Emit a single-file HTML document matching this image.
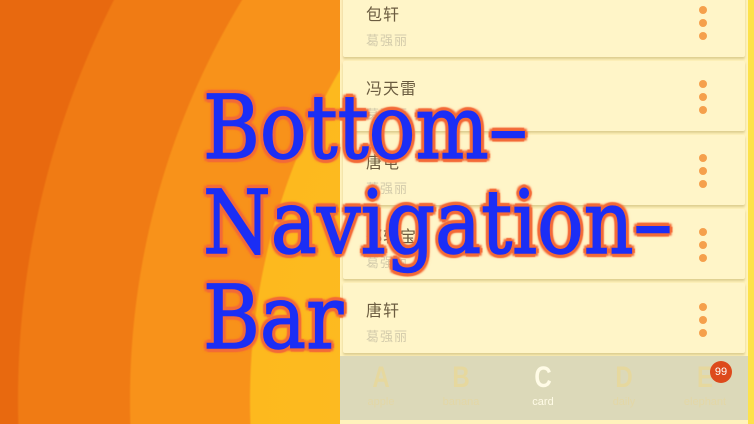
<!DOCTYPE html>
<html><head><meta charset="utf-8"><style>
*{margin:0;padding:0;box-sizing:border-box}
body{width:754px;height:424px;overflow:hidden;position:relative;font-family:"Liberation Sans","Noto Sans CJK SC",sans-serif;
background:radial-gradient(circle at 900px 400px,#fdc42a 0,#fdb91e 649px,#f8921a 651px,#f8921a 769px,#f07b14 771px,#f07b14 881px,#e8690f 883px)}
.panel{position:absolute;left:340px;top:0;width:408px;height:424px;background:rgba(255,246,200,.93)}
.strip{position:absolute;left:748px;top:0;width:6px;height:424px;background:#fde24a}
.card{position:absolute;left:343px;width:402px;height:70px;background:#fff5c8;border-radius:2px;box-shadow:0 2px 2px rgba(180,160,90,.45)}
.n{position:absolute;left:23px;font-size:16px;color:#6b5c40;letter-spacing:1px}
.s{position:absolute;left:23px;font-size:13px;color:#d3cbab;letter-spacing:1px}
.d{position:absolute;left:356px;width:8px;height:8px;border-radius:50%;background:#f5a04c}
.nav{position:absolute;left:340px;top:356px;width:408px;height:64px;background:#dcd9b9}
.it{position:absolute;top:4px;width:60px;text-align:center;color:#e6d89e}
.it b{display:block;font:bold 30px/36px "Liberation Sans Narrow","Liberation Sans",sans-serif;transform:scaleX(.8)}
.it i{display:block;font-style:normal;font-size:11px;line-height:12px;color:#e3d7a6}
.badge{position:absolute;left:710px;top:361px;width:22px;height:22px;border-radius:50%;background:#dd4a1c;color:#fff;font-size:11px;text-align:center;line-height:22px}
.title{position:absolute;left:203px;top:80px;font-family:"DejaVu Serif",serif;font-size:88px;line-height:95px;color:#1b2ef5;-webkit-text-stroke:1.5px #1b2ef5;transform-origin:0 0;transform:scaleX(.88);white-space:nowrap;
text-shadow:0 0 2px #f36a38,4px 0 1px #f36a38,-4px 0 1px #f36a38,0 4px 1px #f36a38,0 -4px 1px #f36a38,3px 3px 2px #f36a38,-3px -3px 2px #f36a38,3px -3px 2px #f36a38,-3px 3px 2px #f36a38,0 0 6px #f36a38}
</style></head><body>
<div class="panel"></div><div class="strip"></div>
<div class="card" style="top:-13px"><div class="n" style="top:14px">包轩</div><div class="s" style="top:43px">葛强丽</div><div class="d" style="top:19px"></div><div class="d" style="top:32px"></div><div class="d" style="top:45px"></div></div>
<div class="card" style="top:61px"><div class="n" style="top:14px">冯天雷</div><div class="s" style="top:43px">葛强丽</div><div class="d" style="top:19px"></div><div class="d" style="top:32px"></div><div class="d" style="top:45px"></div></div>
<div class="card" style="top:135px"><div class="n" style="top:14px">唐屯</div><div class="s" style="top:43px">葛强丽</div><div class="d" style="top:19px"></div><div class="d" style="top:32px"></div><div class="d" style="top:45px"></div></div>
<div class="card" style="top:209px"><div class="n" style="top:14px">郑轩宝</div><div class="s" style="top:43px">葛强丽</div><div class="d" style="top:19px"></div><div class="d" style="top:32px"></div><div class="d" style="top:45px"></div></div>
<div class="card" style="top:283px"><div class="n" style="top:14px">唐轩</div><div class="s" style="top:43px">葛强丽</div><div class="d" style="top:20px"></div><div class="d" style="top:33px"></div><div class="d" style="top:46px"></div></div>
<div class="nav">
<div class="it" style="left:11px"><b>A</b><i>apple</i></div>
<div class="it" style="left:91px"><b>B</b><i>banana</i></div>
<div class="it" style="left:173px;color:#fffbe6"><b>C</b><i style="color:#fffbe6">card</i></div>
<div class="it" style="left:254px"><b>D</b><i>daily</i></div>
<div class="it" style="left:335px"><b>E</b><i>elephant</i></div>
</div>
<div class="badge">99</div>
<div class="title">Bottom–<br>Navigation–<br>Bar</div>
</body></html>
